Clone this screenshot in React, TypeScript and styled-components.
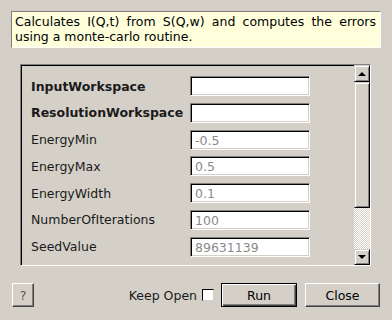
import React from 'react'
import styled, { createGlobalStyle } from 'styled-components'

const Global = createGlobalStyle`
  html, body {
    margin: 0;
    padding: 0;
    background: #d4d0c8;
    font-family: "DejaVu Sans", "Liberation Sans", sans-serif;
    font-size: 12.5px;
    color: #000;
  }
`

const Dialog = styled.div`
  width: 392px;
  height: 320px;
  box-sizing: border-box;
  padding: 11px 11px 0 11px;
  display: flex;
  flex-direction: column;
`

const Description = styled.div`
  height: 37px;
  box-sizing: border-box;
  background: #ffffdc;
  border: 1px solid;
  border-color: #808080 #fff #fff #808080;
  padding: 2px 4px 0 3px;
  line-height: 15px;
  text-align: justify;
  color: #000;
`

const Frame = styled.div`
  margin: 16px 10px 0 9px;
  height: 202px;
  box-sizing: border-box;
  border: 1px solid;
  border-color: #808080 #fff #fff #808080;
  display: flex;
`

const Inner = styled.div`
  flex: 1;
  border-top: 1px solid #000;
  border-left: 1px solid #000;
  display: flex;
`

const Rows = styled.div`
  flex: 1;
  padding: 10px 0 0 9px;
  display: flex;
  flex-direction: column;
  gap: 6.8px;
`

const Row = styled.div`
  display: flex;
  align-items: center;
  height: 20px;
`

const Label = styled.span<{ $bold?: boolean }>`
  width: 159px;
  font-weight: ${p => (p.$bold ? 'bold' : 'normal')};
  color: #1a1a1a;
  white-space: nowrap;
`

const Field = styled.div`
  width: 120px;
  height: 20px;
  box-sizing: border-box;
  background: #fff;
  border: 1px solid;
  border-color: #808080 #fff #fff #808080;
  box-shadow: inset 1px 1px 0 #000, inset -1px -1px 0 #d4d0c8;
  padding: 2px 0 0 4px;
  color: #8a8a8a;
  line-height: 15px;
`

const ScrollBar = styled.div`
  width: 16px;
  display: flex;
  flex-direction: column;
  margin-top: -1px;
`

const Raised = styled.div<{ $h?: number }>`
  height: ${p => (p.$h ? `${p.$h}px` : 'auto')};
  flex: ${p => (p.$h ? 'none' : '1')};
  box-sizing: border-box;
  background: #d4d0c8;
  border: 1px solid;
  border-color: #d4d0c8 #000 #000 #d4d0c8;
  box-shadow: inset 1px 1px 0 #fff, inset -1px -1px 0 #808080;
  display: flex;
  align-items: center;
  justify-content: center;
`

const Track = styled.div`
  height: 41px;
  background: repeating-conic-gradient(#d4d0c8 0 25%, #fff 0 50%) 0 0 / 2px 2px;
`

const Arrow = styled.div<{ $down?: boolean }>`
  width: 0;
  height: 0;
  border-left: 4px solid transparent;
  border-right: 4px solid transparent;
  ${p =>
    p.$down ? 'border-top: 4px solid #000;' : 'border-bottom: 4px solid #000;'}
`

const Footer = styled.div`
  margin-top: 17px;
  display: flex;
  align-items: center;
  padding: 0 1px 0 1px;
`

const Button = styled.button<{ $w: number; $default?: boolean }>`
  width: ${p => p.$w}px;
  height: 24px;
  box-sizing: border-box;
  background: #d4d0c8;
  font-family: inherit;
  font-size: 12.5px;
  color: #000;
  padding: 0;
  border: 1px solid;
  border-color: ${p =>
    p.$default ? '#000' : '#fff #404040 #404040 #fff'};
  box-shadow: ${p =>
    p.$default
      ? 'inset 1px 1px 0 #fff, inset -1px -1px 0 #404040, inset -2px -2px 0 #808080'
      : 'inset -1px -1px 0 #808080'};
`

const Help = styled(Button)`
  color: #555;
`

const Spacer = styled.div`
  flex: 1;
`

const Keep = styled.label`
  display: flex;
  align-items: center;
  gap: 5px;
  color: #1a1a1a;
  margin-right: 7px;
`

const Check = styled.span`
  width: 12px;
  height: 12px;
  box-sizing: border-box;
  background: #fff;
  border: 1px solid;
  border-color: #000 #d4d0c8 #d4d0c8 #000;
`

const props: { name: string; value: string; bold?: boolean }[] = [
  { name: 'InputWorkspace', value: '', bold: true },
  { name: 'ResolutionWorkspace', value: '', bold: true },
  { name: 'EnergyMin', value: '-0.5' },
  { name: 'EnergyMax', value: '0.5' },
  { name: 'EnergyWidth', value: '0.1' },
  { name: 'NumberOfIterations', value: '100' },
  { name: 'SeedValue', value: '89631139' },
]

export default function App() {
  return (
    <Dialog>
      <Global />
      <Description>
        Calculates I(Q,t) from S(Q,w) and computes the errors using a
        monte-carlo routine.
      </Description>
      <Frame>
        <Inner>
          <Rows>
            {props.map(p => (
              <Row key={p.name}>
                <Label $bold={p.bold}>{p.name}</Label>
                <Field>{p.value}</Field>
              </Row>
            ))}
          </Rows>
          <ScrollBar>
            <Raised $h={17}>
              <Arrow />
            </Raised>
            <Raised />
            <Track />
            <Raised $h={16}>
              <Arrow $down />
            </Raised>
          </ScrollBar>
        </Inner>
      </Frame>
      <Footer>
        <Help $w={22}>?</Help>
        <Spacer />
        <Keep>
          Keep Open
          <Check />
        </Keep>
        <Button $w={76} $default>
          Run
        </Button>
        <Button $w={75} style={{ marginLeft: 8 }}>
          Close
        </Button>
      </Footer>
    </Dialog>
  )
}
